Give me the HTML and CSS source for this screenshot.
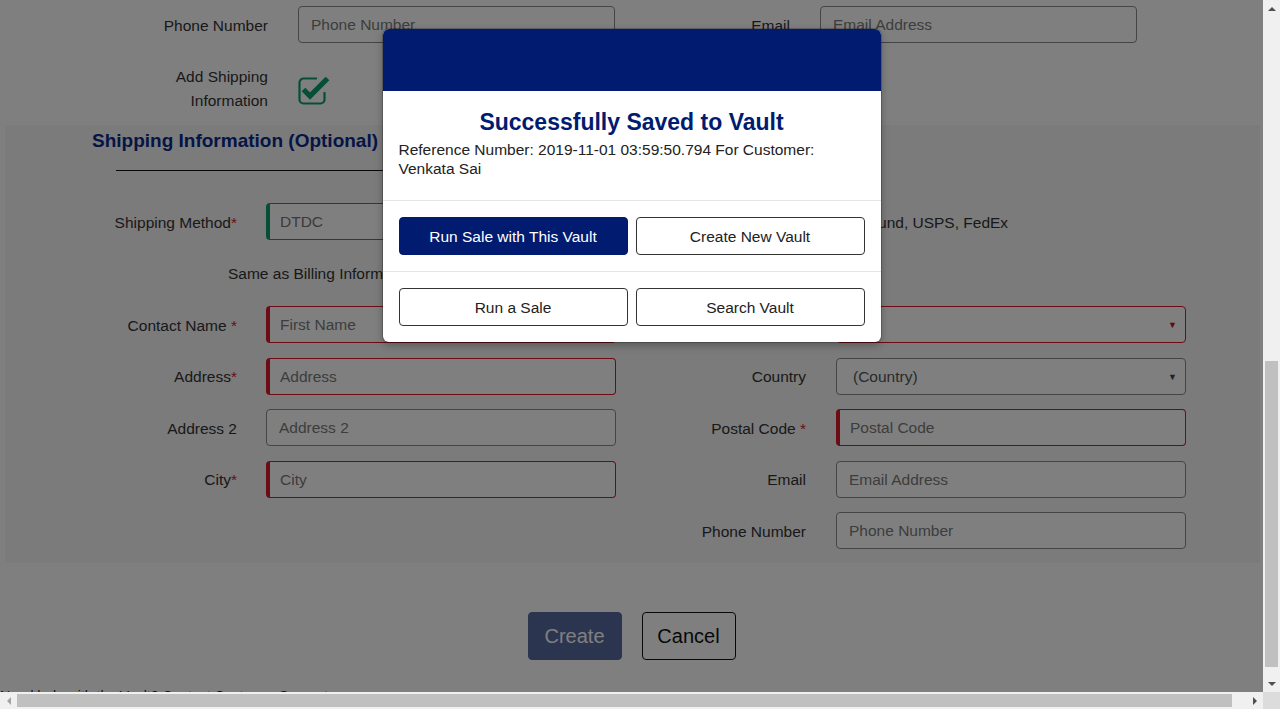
FILE: index.html
```html
<!DOCTYPE html>
<html lang="en">
<head>
<meta charset="utf-8">
<title>Create Vault</title>
<link rel="stylesheet" href="styles.css">
</head>
<body>
<div class="viewport">
  <div class="page">
    <div class="billing-grid">
      <label class="lbl">Phone Number</label>
      <input class="field" placeholder="Phone Number">
      <label class="lbl">Email</label>
      <input class="field" placeholder="Email Address">
      <label class="lbl lbl-wrap">Add Shipping Information</label>
      <div class="check-cell">
        <svg class="check-icon" width="32" height="28" viewBox="0 0 32 28">
          <path d="M19 1.5H5.5a4 4 0 0 0-4 4v17a4 4 0 0 0 4 4h17a4 4 0 0 0 4-4v-7.5" fill="none" stroke="#0a9e6e" stroke-width="2.2"/>
          <path d="M5.5 12.5l6.5 6.5L29.5 1.5" fill="none" stroke="#0a9e6e" stroke-width="5.2" stroke-linejoin="miter"/>
        </svg>
      </div>
    </div>

    <section class="ship-panel">
      <h3 class="ship-title">Shipping Information (Optional)</h3>
      <hr class="ship-rule">
      <div class="ship-rows">
        <div class="row">
          <label class="lbl">Shipping Method<span class="req">*</span></label>
          <input class="field ok" value="DTDC">
          <span class="help">UPS Ground, USPS, FedEx</span>
        </div>
        <div class="row same-row">
          <span class="same">Same as Billing Information</span>
          <span class="box"></span>
        </div>
        <div class="row">
          <label class="lbl">Contact Name <span class="req">*</span></label>
          <input class="field bad" placeholder="First Name">
          <label class="lbl lbl-r">State<span class="req">*</span></label>
          <div class="select bad-sel"><span>(State)</span><span class="arrow">▼</span></div>
        </div>
        <div class="row">
          <label class="lbl">Address<span class="req">*</span></label>
          <input class="field bad" placeholder="Address">
          <label class="lbl lbl-r">Country</label>
          <div class="select"><span>(Country)</span><span class="arrow">▼</span></div>
        </div>
        <div class="row">
          <label class="lbl">Address 2</label>
          <input class="field" placeholder="Address 2">
          <label class="lbl lbl-r">Postal Code <span class="req">*</span></label>
          <input class="field bad" placeholder="Postal Code">
        </div>
        <div class="row">
          <label class="lbl">City<span class="req">*</span></label>
          <input class="field bad" placeholder="City">
          <label class="lbl lbl-r">Email</label>
          <input class="field" placeholder="Email Address">
        </div>
        <div class="row">
          <span></span>
          <span></span>
          <label class="lbl lbl-r">Phone Number</label>
          <input class="field" placeholder="Phone Number">
        </div>
      </div>
    </section>

    <div class="actions">
      <button class="btn-create" disabled>Create</button>
      <button class="btn-cancel">Cancel</button>
    </div>
    <p class="footer-note">Need help with the Vault? Contact Customer Support</p>
  </div>

  <div class="overlay">
    <div class="modal">
      <div class="modal-head"></div>
      <div class="modal-body">
        <h2 class="modal-title">Successfully Saved to Vault</h2>
        <p class="modal-text">Reference Number: 2019-11-01 03:59:50.794 For Customer: Venkata Sai</p>
      </div>
      <div class="modal-actions">
        <button class="mbtn mbtn-primary">Run Sale with This Vault</button>
        <button class="mbtn">Create New Vault</button>
      </div>
      <div class="modal-actions">
        <button class="mbtn">Run a Sale</button>
        <button class="mbtn">Search Vault</button>
      </div>
    </div>
  </div>
</div>

<div class="vscroll">
  <div class="sb-btn"><span class="tri tri-up"></span></div>
  <div class="vtrack"><div class="vthumb"></div></div>
  <div class="sb-btn"><span class="tri tri-down"></span></div>
</div>
<div class="hscroll">
  <div class="sb-btn"><span class="tri tri-left"></span></div>
  <div class="htrack"><div class="hthumb"></div></div>
  <div class="sb-btn"><span class="tri tri-right"></span></div>
</div>
<div class="corner"></div>
</body>
</html>
```

FILE: styles.css
```css
* { box-sizing: border-box; }

html, body {
  margin: 0;
  height: 100%;
  overflow: hidden;
}

body {
  display: grid;
  grid-template-columns: 1fr 17px;
  grid-template-rows: 1fr 17px;
  font-family: "Liberation Sans", Arial, sans-serif;
  font-size: 15.5px;
  color: #333;
  background: #fff;
}

.viewport {
  position: relative;
  overflow: hidden;
  background: #fff;
}

.page {
  padding-top: 6px;
}

/* top billing rows */
.billing-grid {
  display: grid;
  grid-template-columns: 120px 317px 145px 317px;
  column-gap: 30px;
  row-gap: 22px;
  margin-left: 148px;
  align-items: center;
  margin-bottom: 12px;
}

.lbl {
  text-align: right;
  color: #333;
  line-height: 24px;
  padding-top: 2px;
}

.lbl-wrap {
  line-height: 24px;
  padding-top: 0;
}

.check-cell {
  display: flex;
  align-items: center;
  padding-top: 4px;
}

.check-icon { display: block; }

.field {
  height: 37px;
  width: 100%;
  border: 1px solid #8a8a8a;
  border-radius: 4px;
  padding: 1px 12px 0;
  font-family: inherit;
  font-size: 15.5px;
  color: #777;
  background: #fff;
  outline: none;
}

.field::placeholder { color: #7a7a7a; }

.field.bad {
  border-color: #d9182b;
  border-left-width: 4px;
  padding-left: 10px;
}

.field.ok {
  border-color: #0a9e6e;
  border-left-width: 4px;
  padding-left: 10px;
}

.req { color: #d9182b; }

/* shipping panel */
.ship-panel {
  margin-left: 5px;
  width: 1255px;
  background: #f6f6f6;
  padding: 4px 0 14px;
}

.ship-title {
  margin: 0 0 0 87px;
  padding-top: 1px;
  font-size: 19px;
  line-height: 22px;
  font-weight: bold;
  color: #0a2a8c;
}

.ship-rule {
  margin: 18px 0 32px 111px;
  width: 420px;
  border: 0;
  border-top: 1px solid #111;
  height: 0;
}

.ship-rows {
  display: flex;
  flex-direction: column;
  gap: 14.5px;
}

.row {
  display: grid;
  grid-template-columns: 261px 350px 220px 350px;
  align-items: center;
  height: 37px;
}

.row .lbl { padding-right: 29px; }
.row .lbl-r { padding-right: 30px; }

.help {
  grid-column: 3 / span 2;
  padding-left: 200px;
  padding-top: 2px;
  color: #333;
}

.same-row {
  height: 24px;
  margin: 6.5px 0;
  display: flex;
  align-items: center;
  padding-left: 223px;
  gap: 12px;
}

.same { color: #333; padding-top: 2px; }

.box {
  width: 16px;
  height: 16px;
  border: 1px solid #888;
  border-radius: 2px;
  background: #fff;
}

.select {
  height: 37px;
  border: 1px solid #8a8a8a;
  border-radius: 4px;
  background: #fff;
  display: flex;
  align-items: center;
  justify-content: space-between;
  padding: 1px 8px 0 16px;
  color: #555;
}

.select .arrow {
  font-size: 9px;
  color: #444;
}

.select.bad-sel { border-color: #d9182b; }
.select.bad-sel span:first-child { visibility: hidden; }
.select.bad-sel .arrow { color: #c41022; }

/* bottom actions */
.actions {
  display: flex;
  justify-content: center;
  gap: 20px;
  margin-top: 49px;
}

.btn-create,
.btn-cancel {
  width: 94px;
  height: 48px;
  border-radius: 4px;
  font-family: inherit;
  font-size: 20px;
  padding: 0;
}

.btn-create {
  background: #001b6f;
  color: #fff;
  border: 1px solid #001b6f;
  opacity: 0.65;
}

.btn-cancel {
  background: #fff;
  color: #111;
  border: 1px solid #111;
}

.footer-note {
  margin: 28px 0 0;
  font-size: 14px;
  line-height: 16px;
  color: #222;
}

/* overlay + modal */
.overlay {
  position: absolute;
  inset: 0;
  background: rgba(0, 0, 0, 0.5);
  display: flex;
  justify-content: center;
  align-items: flex-start;
  padding-top: 29px;
}

.modal {
  width: 498px;
  background: #fff;
  border-radius: 6px;
  overflow: hidden;
  box-shadow: 0 0 0 1px rgba(0, 0, 0, 0.2), 0 3px 9px rgba(0, 0, 0, 0.3);
}

.modal-head {
  height: 62px;
  background: #001b6f;
}

.modal-body {
  padding: 17px 16px 22px;
}

.modal-title {
  margin: 0 0 4px;
  text-align: center;
  font-size: 23px;
  line-height: 28px;
  font-weight: bold;
  color: #001b6f;
}

.modal-text {
  margin: 0;
  line-height: 19px;
  color: #222;
}

.modal-actions {
  border-top: 1px solid #e5e5e5;
  padding: 16px;
  display: grid;
  grid-template-columns: 1fr 1fr;
  gap: 8px;
}

.mbtn {
  height: 38px;
  border: 1px solid #333;
  border-radius: 4px;
  background: #fff;
  color: #222;
  font-family: inherit;
  font-size: 15.5px;
  padding: 1px 0 0;
}

.mbtn-primary {
  background: #001b6f;
  border-color: #001b6f;
  color: #fff;
}

/* fake scrollbars */
.vscroll {
  background: #f0f0f0;
  display: flex;
  flex-direction: column;
}

.hscroll {
  background: #f0f0f0;
  display: flex;
}

.sb-btn {
  flex: 0 0 17px;
  height: 17px;
  display: flex;
  align-items: center;
  justify-content: center;
}

.vtrack {
  flex: 1;
  padding: 344px 2px 0;
}

.vthumb {
  height: 306px;
  background: #c0c0c0;
}

.htrack {
  flex: 1;
  padding: 2px 0;
}

.hthumb {
  width: 1215px;
  height: 13px;
  background: #c0c0c0;
}

.tri {
  width: 0;
  height: 0;
  border: 4px solid transparent;
}

.tri-up { border-bottom-color: #505050; border-top-width: 0; }
.tri-down { border-top-color: #505050; border-bottom-width: 0; }
.tri-left { border-right-color: #a3a3a3; border-left-width: 0; }
.tri-right { border-left-color: #505050; border-right-width: 0; }

.corner { background: #dcdcdc; }
```
